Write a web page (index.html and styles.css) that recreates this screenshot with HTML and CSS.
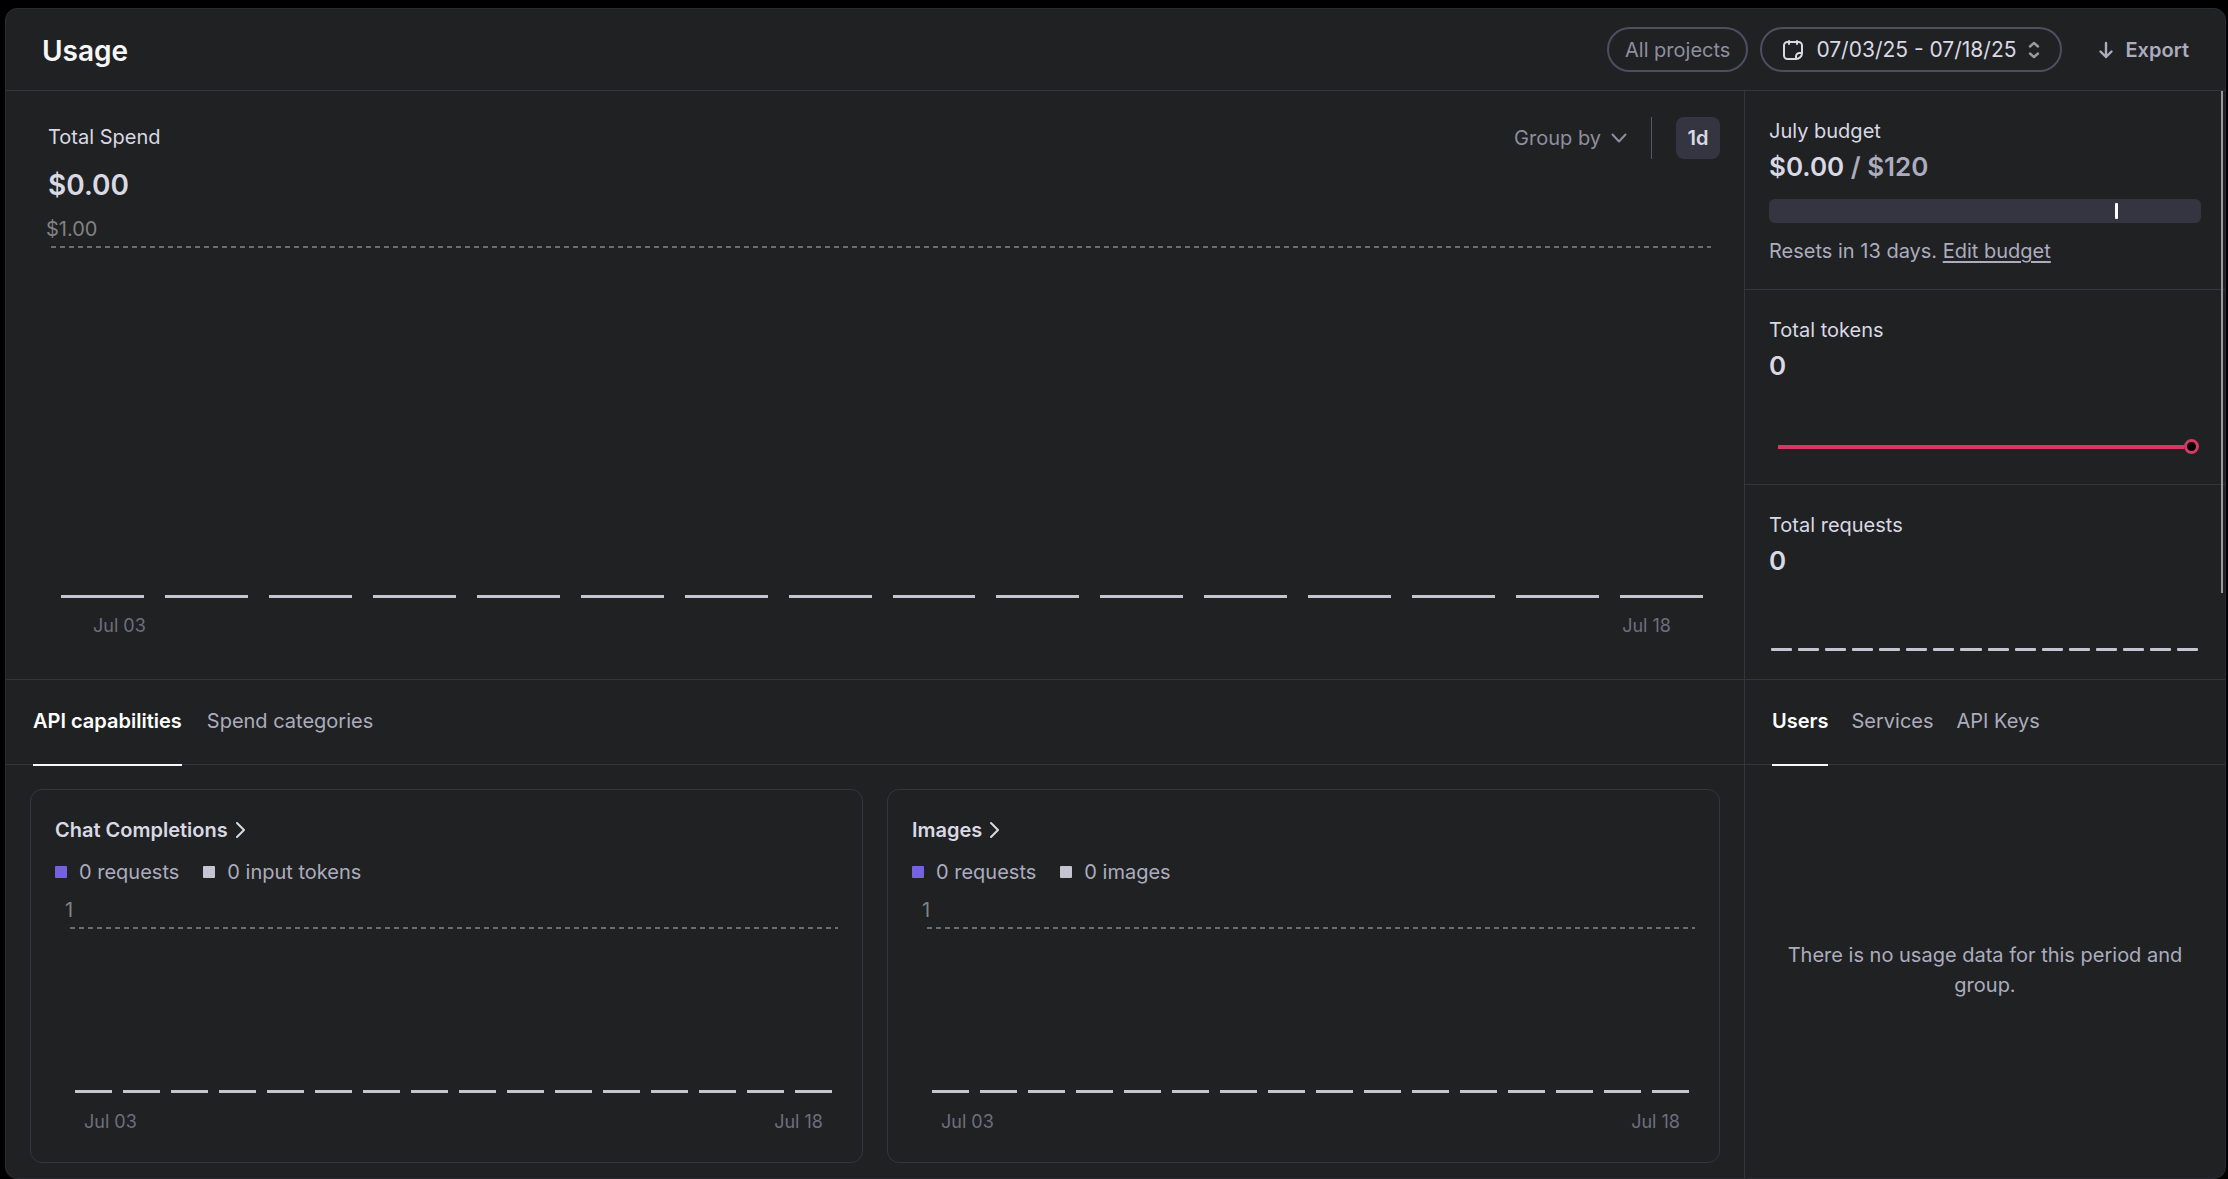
FILE: index.html
```html
<!DOCTYPE html>
<html lang="en">
<head>
<meta charset="utf-8">
<meta name="viewport" content="width=device-width, initial-scale=1">
<title>Usage</title>
<link rel="stylesheet" href="styles.css">
</head>
<body>
<div class="panel">
  <header class="topbar">
    <h1 class="page-title">Usage</h1>
    <div class="toolbar">
      <button class="pill pill-muted" type="button">All projects</button>
      <button class="pill pill-date" type="button">
        <svg class="icon-calendar" width="22" height="22" viewBox="0 0 22 22" fill="none" stroke="currentColor" stroke-width="2" stroke-linecap="round" stroke-linejoin="round" aria-hidden="true"><path d="M14 20H5.500a3.500 3.500 0 0 1-3.500-3.500V6.500A3.500 3.500 0 0 1 5.500 3h11A3.500 3.500 0 0 1 20 6.500V14a6 6 0 0 1-6 6v-2.500a3.500 3.500 0 0 1 3.500-3.500H20M7 2v3M15 2v3"/></svg>
        <span>07/03/25 - 07/18/25</span>
        <svg class="icon-sort" width="12" height="18" viewBox="0 0 12 18" fill="none" stroke="currentColor" stroke-width="2.4" stroke-linecap="round" stroke-linejoin="round" aria-hidden="true"><path d="M2 5.500l4-3.500 4 3.500M2 12.500l4 3.500 4-3.500"/></svg>
      </button>
      <button class="export" type="button">
        <svg width="16" height="18" viewBox="0 0 16 18" fill="none" stroke="currentColor" stroke-width="2.400" stroke-linecap="round" stroke-linejoin="round" aria-hidden="true"><path d="M8 2v14M2.500 10.500L8 16l5.500-5.500"/></svg>
        <span>Export</span>
      </button>
    </div>
  </header>

  <div class="layout">
    <section class="spend">
      <div class="spend-head">
        <div class="spend-total">
          <h2 class="label">Total Spend</h2>
          <p class="spend-value">$0.00</p>
        </div>
        <div class="spend-controls">
          <button class="group-by" type="button">
            <span>Group by</span>
            <svg width="16" height="10" viewBox="0 0 16 10" fill="none" stroke="currentColor" stroke-width="2" stroke-linecap="round" stroke-linejoin="round" aria-hidden="true"><path d="M1.500 1.500L8 8.500l6.500-7"/></svg>
          </button>
          <span class="divider"></span>
          <button class="interval" type="button">1d</button>
        </div>
      </div>
      <div class="chart chart-main">
        <p class="axis-max">$1.00</p>
        <div class="plot">
          <div class="bars"><i></i><i></i><i></i><i></i><i></i><i></i><i></i><i></i><i></i><i></i><i></i><i></i><i></i><i></i><i></i><i></i></div>
        </div>
        <div class="axis-dates"><span>Jul 03</span><span>Jul 18</span></div>
      </div>
    </section>

    <aside class="stats">
      <section class="stat">
        <h2 class="label">July budget</h2>
        <p class="stat-value">$0.00 <span class="stat-limit">/ $120</span></p>
        <div class="budget-bar"><span class="budget-mark"></span></div>
        <p class="budget-note">Resets in 13 days. <a href="#budget">Edit budget</a></p>
      </section>
      <section class="stat">
        <h2 class="label">Total tokens</h2>
        <p class="stat-value">0</p>
        <div class="sparkline"><span class="spark-line"></span><span class="spark-dot"></span></div>
      </section>
      <section class="stat">
        <h2 class="label">Total requests</h2>
        <p class="stat-value">0</p>
        <div class="bars bars-small"><i></i><i></i><i></i><i></i><i></i><i></i><i></i><i></i><i></i><i></i><i></i><i></i><i></i><i></i><i></i><i></i></div>
      </section>
      <span class="scroll-thumb"></span>
    </aside>

    <section class="breakdown">
      <div class="tabs" role="tablist">
        <button class="tab tab-active" type="button" role="tab" aria-selected="true">API capabilities</button>
        <button class="tab" type="button" role="tab" aria-selected="false">Spend categories</button>
      </div>
      <div class="cards">
        <article class="card">
          <h3 class="card-title"><a href="#chat">Chat Completions
            <svg width="10" height="18" viewBox="0 0 10 18" fill="none" stroke="currentColor" stroke-width="2" stroke-linecap="round" stroke-linejoin="round" aria-hidden="true"><path d="M1 2l7 7-7 7"/></svg></a></h3>
          <ul class="legend">
            <li><span class="swatch swatch-requests"></span>0 requests</li>
            <li><span class="swatch"></span>0 input tokens</li>
          </ul>
          <div class="chart chart-card">
            <p class="axis-max">1</p>
            <div class="plot">
              <div class="bars"><i></i><i></i><i></i><i></i><i></i><i></i><i></i><i></i><i></i><i></i><i></i><i></i><i></i><i></i><i></i><i></i></div>
            </div>
            <div class="axis-dates"><span>Jul 03</span><span>Jul 18</span></div>
          </div>
        </article>
        <article class="card">
          <h3 class="card-title"><a href="#images">Images
            <svg width="10" height="18" viewBox="0 0 10 18" fill="none" stroke="currentColor" stroke-width="2" stroke-linecap="round" stroke-linejoin="round" aria-hidden="true"><path d="M1 2l7 7-7 7"/></svg></a></h3>
          <ul class="legend">
            <li><span class="swatch swatch-requests"></span>0 requests</li>
            <li><span class="swatch"></span>0 images</li>
          </ul>
          <div class="chart chart-card">
            <p class="axis-max">1</p>
            <div class="plot">
              <div class="bars"><i></i><i></i><i></i><i></i><i></i><i></i><i></i><i></i><i></i><i></i><i></i><i></i><i></i><i></i><i></i><i></i></div>
            </div>
            <div class="axis-dates"><span>Jul 03</span><span>Jul 18</span></div>
          </div>
        </article>
      </div>
    </section>

    <section class="groups">
      <div class="tabs tabs-side" role="tablist">
        <button class="tab tab-active" type="button" role="tab" aria-selected="true">Users</button>
        <button class="tab" type="button" role="tab" aria-selected="false">Services</button>
        <button class="tab" type="button" role="tab" aria-selected="false">API Keys</button>
      </div>
      <p class="empty">There is no usage data for this period and group.</p>
    </section>
  </div>
</div>
</body>
</html>
```

FILE: styles.css
```css
:root {
  --surface: #202123;
  --line: #343541;
  --outline: #565869;
  --bright: #f7f7f8;
  --text: #d9d9e3;
  --soft: #acacbe;
  --muted: #8e8ea0;
  --faint: #6e6e80;
  --bar: #c5c5d2;
}

* { box-sizing: border-box; }

body {
  margin: 0;
  background: #000;
  color: var(--text);
  font-family: Inter, "Liberation Sans", sans-serif;
  font-size: 20px;
  line-height: 30px;
}

h1, h2, h3, p, ul { margin: 0; padding: 0; font-weight: 400; font-size: inherit; }
ul { list-style: none; }
svg { display: block; flex: none; }

button {
  margin: 0;
  padding: 0;
  border: 0;
  background: none;
  color: inherit;
  font: inherit;
  cursor: pointer;
}

.panel {
  display: flex;
  flex-direction: column;
  min-height: calc(100vh - 8px);
  margin: 8px 2px 0 5px;
  border: 1px solid #2a2b36;
  border-radius: 12px;
  background: var(--surface);
  overflow: hidden;
}

/* Top bar */
.topbar {
  display: flex;
  align-items: center;
  justify-content: space-between;
  height: 82px;
  padding: 0 36px;
  border-bottom: 1px solid var(--line);
}
.page-title { padding-top: 2px; color: var(--bright); font-size: 28px; font-weight: 600; }
.toolbar { display: flex; align-items: center; gap: 12px; }
.pill {
  display: flex;
  align-items: center;
  height: 45px;
  padding: 0 16px;
  border: 2px solid #4e4d62;
  border-radius: 24px;
}
.pill-muted { color: var(--muted); }
.pill-date { padding: 0 20px; font-size: 21px; }
.icon-calendar { margin-right: 12px; }
.icon-sort { margin-left: 12px; color: #9a9a9c; }
.export {
  display: flex;
  align-items: center;
  gap: 11px;
  margin-left: 24px;
  color: var(--soft);
  font-weight: 600;
}

/* Main grid */
.layout {
  display: grid;
  flex: 1;
  grid-template-columns: minmax(0, 1fr) 481px;
  grid-template-rows: auto 1fr;
}
.stats, .groups { border-left: 1px solid var(--line); }

/* Spend chart */
.spend {
  display: flex;
  flex-direction: column;
  padding: 26px 24px 38px 40px;
  border-bottom: 1px solid var(--line);
}
.spend-head { display: flex; justify-content: space-between; align-items: flex-start; }
.spend-total { padding-left: 2px; }
.spend .label { line-height: 40px; }
.spend-value { font-size: 28px; font-weight: 600; line-height: 56px; }
.spend-controls { display: flex; align-items: center; gap: 24px; color: var(--muted); }
.group-by { display: flex; align-items: center; gap: 10px; }
.divider { width: 1px; height: 42px; background: var(--outline); }
.interval {
  width: 44px;
  height: 42px;
  border-radius: 8px;
  background: var(--line);
  color: var(--text);
  font-weight: 600;
}

/* Charts */
.chart { display: flex; flex-direction: column; }
.chart-main { flex: 1; margin-right: 9px; }
.chart-card { margin: 7px 0 0 10px; }
.axis-max { color: #828283; line-height: 33px; }
.plot {
  display: flex;
  flex: 1;
  align-items: flex-end;
  margin-left: 5px;
  background: repeating-linear-gradient(90deg, #6c6d6e 0 5px, transparent 5px 9px) top / 100% 2px no-repeat;
}
.chart-main .plot { padding: 0 8px 0 10px; }
.chart-card .plot { min-height: 166px; padding: 0 6px 0 5px; }
.bars { display: grid; flex: 1; grid-template-columns: repeat(16, minmax(0, 1fr)); column-gap: 21px; }
.bars i { height: 3px; background: var(--bar); }
.chart-card .bars { column-gap: 11px; }
.axis-dates {
  display: flex;
  justify-content: space-between;
  padding-top: 13px;
  color: var(--faint);
  font-size: 18px;
}
.chart-main .axis-dates { padding-left: 47px; padding-right: 40px; }
.chart-card .axis-dates { padding: 14px 15px 0 19px; }

/* Sidebar stats */
.stats { position: relative; }
.stat {
  display: flex;
  flex-direction: column;
  min-height: 195px;
  padding: 24px 24px 22px;
  border-bottom: 1px solid var(--line);
}
.stat .label { line-height: 32px; }
.stat-value { font-size: 26px; font-weight: 600; line-height: 40px; }
.stat-limit { color: var(--soft); }
.budget-bar {
  display: flex;
  align-items: center;
  height: 24px;
  margin: 12px 0;
  padding-left: 80%;
  border-radius: 6px;
  background: var(--line);
}
.budget-mark { width: 3px; height: 16px; border-radius: 1px; background: #fff; }
.budget-note { color: var(--soft); line-height: 32px; }
.budget-note a { color: inherit; text-underline-offset: 3px; }
.sparkline { display: flex; align-items: center; margin: 53px 2px 0 9px; }
.spark-line { flex: 1; height: 4px; background: #d63864; }
.spark-dot { width: 15px; height: 15px; border: 3px solid #d63864; border-radius: 50%; background: #000; }
.bars-small { flex: none; margin: 67px 3px 0 2px; column-gap: 6px; }
.bars-small i { border-radius: 1px; }
.scroll-thumb {
  position: absolute;
  top: 0;
  right: 2px;
  width: 2px;
  height: 502px;
  background: #9a9a9a;
}

/* Tabs */
.tabs {
  display: flex;
  gap: 25px;
  height: 85px;
  padding: 0 27px;
  border-bottom: 1px solid var(--line);
}
.tabs-side { gap: 23px; }
.tab { height: 86px; padding-bottom: 2px; border-bottom: 2px solid transparent; color: var(--soft); }
.tab-active { border-bottom-color: var(--bright); color: #fff; font-weight: 600; }

/* Capability cards */
.cards {
  display: grid;
  grid-template-columns: repeat(2, minmax(0, 1fr));
  gap: 24px;
  padding: 24px 24px 15px;
}
.card { padding: 24px 24px 25px; border: 1px solid var(--line); border-radius: 12px; }
.card-title { font-weight: 600; line-height: 32px; }
.card-title a { display: inline-flex; align-items: center; gap: 8px; color: inherit; text-decoration: none; }
.legend { display: flex; gap: 24px; margin-top: 11px; color: var(--soft); }
.legend li { display: flex; align-items: center; gap: 12px; }
.swatch { width: 12px; height: 12px; border-radius: 1px; background: var(--bar); }
.swatch-requests { background: #7661e0; }

/* Grouped usage */
.groups { display: flex; flex-direction: column; }
.empty {
  display: flex;
  flex: 1;
  align-items: center;
  padding: 0 24px 4px;
  color: var(--soft);
  text-align: center;
}
```
